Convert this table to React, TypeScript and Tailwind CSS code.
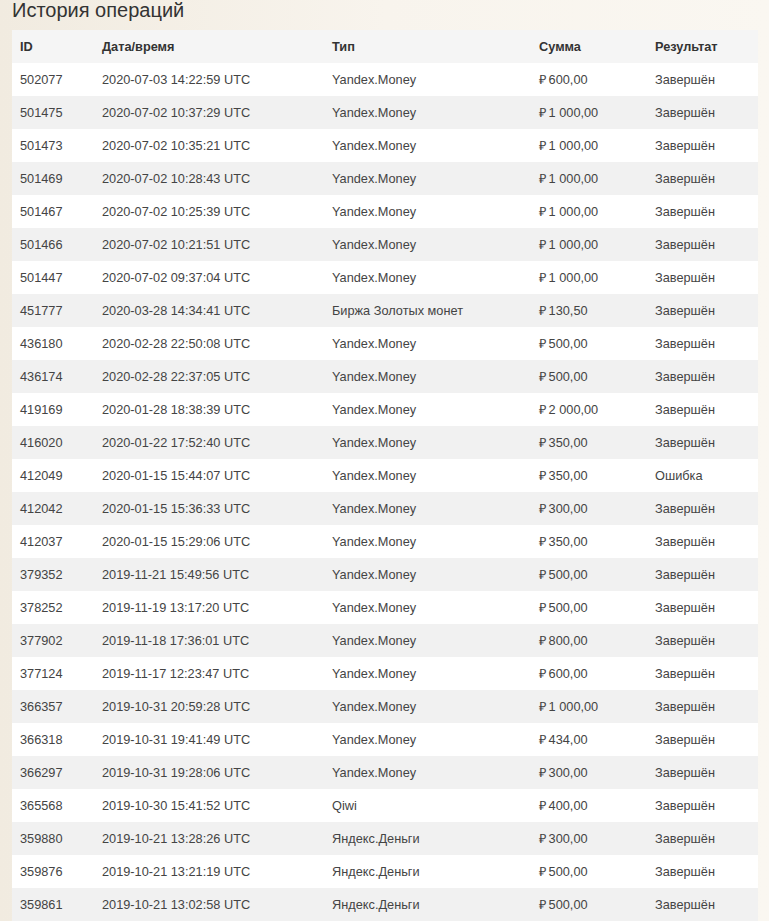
import React from 'react'

type Op = { id: string; date: string; type: string; sum: string; result: string }

const ops: Op[] = [
    { id: '502077', date: '2020-07-03 14:22:59 UTC', type: 'Yandex.Money', sum: '600,00', result: 'Завершён' },
    { id: '501475', date: '2020-07-02 10:37:29 UTC', type: 'Yandex.Money', sum: '1 000,00', result: 'Завершён' },
    { id: '501473', date: '2020-07-02 10:35:21 UTC', type: 'Yandex.Money', sum: '1 000,00', result: 'Завершён' },
    { id: '501469', date: '2020-07-02 10:28:43 UTC', type: 'Yandex.Money', sum: '1 000,00', result: 'Завершён' },
    { id: '501467', date: '2020-07-02 10:25:39 UTC', type: 'Yandex.Money', sum: '1 000,00', result: 'Завершён' },
    { id: '501466', date: '2020-07-02 10:21:51 UTC', type: 'Yandex.Money', sum: '1 000,00', result: 'Завершён' },
    { id: '501447', date: '2020-07-02 09:37:04 UTC', type: 'Yandex.Money', sum: '1 000,00', result: 'Завершён' },
    { id: '451777', date: '2020-03-28 14:34:41 UTC', type: 'Биржа Золотых монет', sum: '130,50', result: 'Завершён' },
    { id: '436180', date: '2020-02-28 22:50:08 UTC', type: 'Yandex.Money', sum: '500,00', result: 'Завершён' },
    { id: '436174', date: '2020-02-28 22:37:05 UTC', type: 'Yandex.Money', sum: '500,00', result: 'Завершён' },
    { id: '419169', date: '2020-01-28 18:38:39 UTC', type: 'Yandex.Money', sum: '2 000,00', result: 'Завершён' },
    { id: '416020', date: '2020-01-22 17:52:40 UTC', type: 'Yandex.Money', sum: '350,00', result: 'Завершён' },
    { id: '412049', date: '2020-01-15 15:44:07 UTC', type: 'Yandex.Money', sum: '350,00', result: 'Ошибка' },
    { id: '412042', date: '2020-01-15 15:36:33 UTC', type: 'Yandex.Money', sum: '300,00', result: 'Завершён' },
    { id: '412037', date: '2020-01-15 15:29:06 UTC', type: 'Yandex.Money', sum: '350,00', result: 'Завершён' },
    { id: '379352', date: '2019-11-21 15:49:56 UTC', type: 'Yandex.Money', sum: '500,00', result: 'Завершён' },
    { id: '378252', date: '2019-11-19 13:17:20 UTC', type: 'Yandex.Money', sum: '500,00', result: 'Завершён' },
    { id: '377902', date: '2019-11-18 17:36:01 UTC', type: 'Yandex.Money', sum: '800,00', result: 'Завершён' },
    { id: '377124', date: '2019-11-17 12:23:47 UTC', type: 'Yandex.Money', sum: '600,00', result: 'Завершён' },
    { id: '366357', date: '2019-10-31 20:59:28 UTC', type: 'Yandex.Money', sum: '1 000,00', result: 'Завершён' },
    { id: '366318', date: '2019-10-31 19:41:49 UTC', type: 'Yandex.Money', sum: '434,00', result: 'Завершён' },
    { id: '366297', date: '2019-10-31 19:28:06 UTC', type: 'Yandex.Money', sum: '300,00', result: 'Завершён' },
    { id: '365568', date: '2019-10-30 15:41:52 UTC', type: 'Qiwi', sum: '400,00', result: 'Завершён' },
    { id: '359880', date: '2019-10-21 13:28:26 UTC', type: 'Яндекс.Деньги', sum: '300,00', result: 'Завершён' },
    { id: '359876', date: '2019-10-21 13:21:19 UTC', type: 'Яндекс.Деньги', sum: '500,00', result: 'Завершён' },
    { id: '359861', date: '2019-10-21 13:02:58 UTC', type: 'Яндекс.Деньги', sum: '500,00', result: 'Завершён' },
]

function App() {
    return (
        <div className="min-h-[921px] bg-gradient-to-r from-[#f1ebe0] via-[#f8f4ed] to-[#faf7f1] px-3 overflow-hidden font-['Liberation_Sans',Arial,sans-serif]">
            <h2 className="text-[20px] leading-[20px] text-[#333] font-normal h-[30px]">История операций</h2>
            <table className="w-[746px] table-fixed border-collapse text-[12.75px] text-[#444]">
                <colgroup>
                    <col className="w-[82px]" />
                    <col className="w-[230px]" />
                    <col className="w-[207px]" />
                    <col className="w-[116px]" />
                    <col className="w-[111px]" />
                </colgroup>
                <thead>
                    <tr className="h-[33px] bg-[#f5f5f5] text-[#333]">
                        <th className="text-left font-bold px-2">ID</th>
                        <th className="text-left font-bold px-2">Дата/время</th>
                        <th className="text-left font-bold px-2">Тип</th>
                        <th className="text-left font-bold px-2">Сумма</th>
                        <th className="text-left font-bold px-2">Результат</th>
                    </tr>
                </thead>
                <tbody>
                    {ops.map((op, i) => (
                        <tr key={op.id} className={i % 2 === 0 ? 'h-[33px] bg-white' : 'h-[33px] bg-[#f1f1f1]'}>
                            <td className="px-2 whitespace-nowrap">{op.id}</td>
                            <td className="px-2 whitespace-nowrap">{op.date}</td>
                            <td className="px-2 whitespace-nowrap">{op.type}</td>
                            <td className="px-2 whitespace-nowrap">₽&#8239;{op.sum}</td>
                            <td className="px-2 whitespace-nowrap">{op.result}</td>
                        </tr>
                    ))}
                </tbody>
            </table>
        </div>
    )
}

export default App
